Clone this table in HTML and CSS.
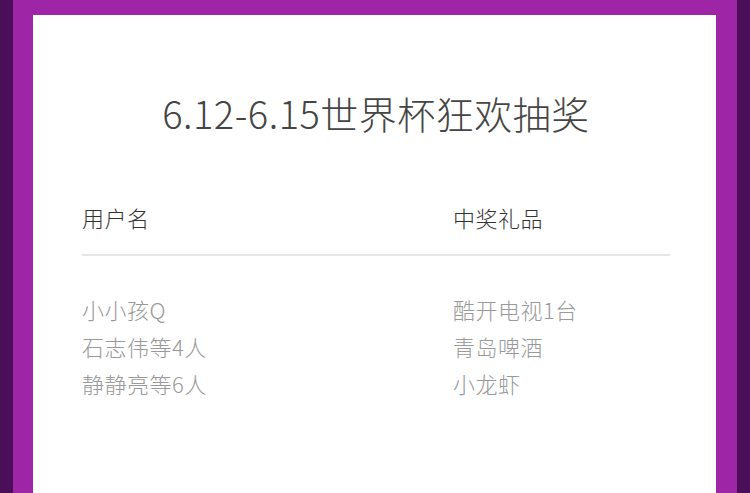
FILE: index.html
```html
<!DOCTYPE html>
<html>
<head>
  <meta charset="utf-8">
  <title>世界杯狂欢抽奖</title>
  <link rel="stylesheet" href="styles.css">
</head>
<body>
  <div class="frame">
    <div class="card">
      <h2 class="title">6.12-6.15世界杯狂欢抽奖</h2>

      <div class="table">
        <div class="row head">
          <span class="col-user">用户名</span>
          <span class="col-gift">中奖礼品</span>
        </div>

        <div class="list">
          <div class="row">
            <span class="col-user">小小孩Q</span>
            <span class="col-gift">酷开电视1台</span>
          </div>
          <div class="row">
            <span class="col-user">石志伟等4人</span>
            <span class="col-gift">青岛啤酒</span>
          </div>
          <div class="row">
            <span class="col-user">静静亮等6人</span>
            <span class="col-gift">小龙虾</span>
          </div>
        </div>
      </div>
    </div>
  </div>
</body>
</html>
```

FILE: styles.css
```css
/* prize draw card */
html,
body {
  height: 100%;
}

body {
  margin: 0;
  overflow: hidden;
  background-color: #4b0f59;
  font-family: "Noto Sans CJK SC", "Noto Sans", sans-serif;
}

.frame {
  height: 100%;
  margin: 0 13px;
  padding: 15px 21px 0 20px;
  background-color: #9d25a6;
  box-sizing: border-box;
}

.card {
  height: 100%;
  background-color: #fff;
  padding: 0 46px 0 49px;
}

.title {
  margin: 0;
  padding-top: 76px;
  text-align: center;
  font-size: 38px;
  font-weight: 300;
  letter-spacing: 0.5px;
  line-height: 44px;
  color: #454545;
}

.table {
  margin-top: 64px;
}

.row {
  display: flex;
  font-size: 22px;
  font-weight: 300;
  letter-spacing: 0.5px;
  line-height: 37px;
}

.col-user {
  width: 371px;
}

.head {
  color: #333;
  padding-bottom: 18px;
  border-bottom: 2px solid #e6e6e6;
}

.list {
  margin-top: 35px;
  color: #999;
}
```
